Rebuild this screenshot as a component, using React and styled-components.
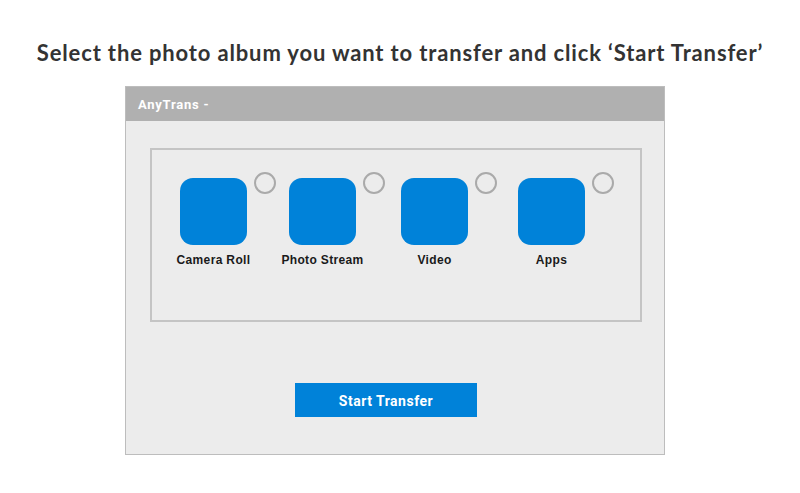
import React from "react";
import styled, { createGlobalStyle } from "styled-components";

const GlobalStyle = createGlobalStyle`
  html, body {
    margin: 0;
    padding: 0;
    background: #ffffff;
  }
`;

const Page = styled.div`
  width: 800px;
  height: 493px;
  display: flex;
  flex-direction: column;
  overflow: hidden;
`;

const Heading = styled.h1`
  align-self: center;
  margin: 38px 0 0;
  height: 30px;
  line-height: 30px;
  font-family: "Lato", "DejaVu Sans", sans-serif;
  font-weight: 700;
  font-size: 22px;
  color: #333333;
  letter-spacing: 0.85px;
  white-space: nowrap;
`;

const Window = styled.div`
  margin-top: 18px;
  margin-left: 125px;
  width: 538px;
  height: 367px;
  border: 1px solid #bdbdbd;
  background: #ececec;
  display: flex;
  flex-direction: column;
`;

const TitleBar = styled.div`
  height: 34px;
  background: #b0b0b0;
  display: flex;
  align-items: center;
  padding-left: 12px;
  font-family: "Roboto", "Liberation Sans", sans-serif;
  font-weight: 700;
  font-size: 13px;
  color: #ffffff;
  letter-spacing: 0.75px;
`;

const Body = styled.div`
  flex: 1;
  display: flex;
  flex-direction: column;
  padding: 27px 0 0 24px;
`;

const Panel = styled.div`
  box-sizing: border-box;
  width: 492px;
  height: 174px;
  border: 2px solid #c4c4c4;
  display: flex;
  align-items: flex-start;
  padding-top: 28px;
`;

const Item = styled.div`
  position: relative;
  margin-left: ${({ $offset }) => $offset}px;
  width: 67px;
  display: flex;
  flex-direction: column;
  align-items: center;
`;

const Tile = styled.div`
  width: 67px;
  height: 67px;
  border-radius: 13px;
  background: #0082d9;
`;

const Radio = styled.div`
  position: absolute;
  top: -6px;
  left: 74px;
  width: 18px;
  height: 18px;
  border: 2px solid #aaaaaa;
  border-radius: 50%;
`;

const Label = styled.div`
  margin-top: 8px;
  font-family: "Liberation Sans", Arial, sans-serif;
  font-weight: 700;
  font-size: 12px;
  letter-spacing: 0.35px;
  color: #1a1a1a;
  white-space: nowrap;
`;

const Footer = styled.div`
  display: flex;
  padding: 61px 0 0 145px;
`;

const StartButton = styled.button`
  width: 182px;
  height: 34px;
  padding-top: 2px;
  border: none;
  background: #0082d9;
  color: #ffffff;
  font-family: "Roboto", "Liberation Sans", sans-serif;
  font-weight: 700;
  font-size: 14px;
  letter-spacing: 0.5px;
  cursor: pointer;
`;

const albums = [
  { name: "Camera Roll", offset: 28 },
  { name: "Photo Stream", offset: 42 },
  { name: "Video", offset: 45 },
  { name: "Apps", offset: 50 },
];

const App = () => {
  return (
    <>
      <GlobalStyle />
      <Page>
        <Heading>Select the photo album you want to transfer and click ‘Start Transfer’</Heading>
        <Window>
          <TitleBar>AnyTrans -</TitleBar>
          <Body>
            <Panel>
              {albums.map((album) => (
                <Item key={album.name} $offset={album.offset}>
                  <Tile />
                  <Radio />
                  <Label>{album.name}</Label>
                </Item>
              ))}
            </Panel>
            <Footer>
              <StartButton>Start Transfer</StartButton>
            </Footer>
          </Body>
        </Window>
      </Page>
    </>
  );
};

export default App;
